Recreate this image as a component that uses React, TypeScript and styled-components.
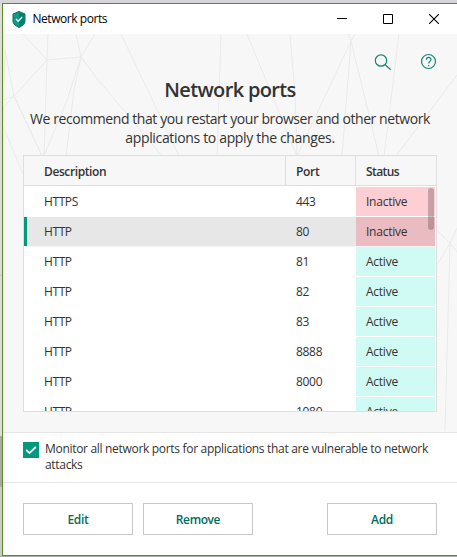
import React from 'react';
import styled, { createGlobalStyle } from 'styled-components';

const GlobalStyle = createGlobalStyle`
  * { box-sizing: border-box; }
  html, body { margin: 0; height: 557px; overflow: hidden; }
  body {
    background: #d3d4d3;
    color: #333;
    font-family: 'Segoe UI', 'Open Sans', 'Noto Sans', sans-serif;
    font-size: 12px;
  }
  button { font: inherit; padding: 0; border: 0; background: none; }
`;

const Desktop = styled.div`
  width: 457px;
  height: 557px;
  padding: 3px 0 1px 2px;
  overflow: hidden;
  background: linear-gradient(#d4d4d9 0 3px, #dcdcdc 3px 275px, #c6c6c6 275px 276px, #dcdcdc 276px 436px, #a9aba9 436px 487px, #c9ccc9 487px 556px, #a5b29f 556px);
`;

const Window = styled.main`
  display: flex;
  flex-direction: column;
  width: 470px;
  height: 553px;
  border: 1px solid #5a8c22;
  background: #fff;
`;

const TitleBar = styled.header`
  display: flex;
  align-items: center;
  width: 454px;
  height: 30px;
  padding-left: 9px;
  color: #000;
`;

const WindowTitle = styled.span`
  flex: 1;
  margin-left: 6.5px;
  line-height: 18px;
  letter-spacing: -0.45px;
`;

const Controls = styled.div`
  display: flex;
  button { display: grid; place-items: center; width: 46px; height: 28px; }
`;

const Content = styled.section`
  display: grid;
  grid-template-columns: 454px;
  height: 399px;
  border-bottom: 1px solid #e6e6e6;
  background: #f7f7f7;
`;

const Mesh = styled.svg`
  grid-area: 1 / 1;
  width: 454px;
  height: 398px;
`;

const Panel = styled.div`
  grid-area: 1 / 1;
  display: flex;
  flex-direction: column;
  z-index: 1;
  padding: 19px 20px 0;
`;

const Tools = styled.div`
  display: flex;
  justify-content: flex-end;
  gap: 28px;
  height: 18px;
  margin-right: -1px;
`;

const Heading = styled.h1`
  width: 414px;
  margin: 6px 0 0;
  font-size: 20px;
  font-weight: 600;
  line-height: 26px;
  letter-spacing: -0.65px;
  text-align: center;
`;

const Advice = styled.p`
  margin: 6px 0 0;
  width: 414px;
  font-size: 14px;
  line-height: 19px;
  text-align: center;
  white-space: nowrap;
`;

const Line = styled.span<{ $spacing: number }>`
  display: block;
  letter-spacing: ${(p) => p.$spacing}px;
`;

const Table = styled.div`
  width: 414px;
  height: 257px;
  margin-top: 8px;
  overflow: hidden;
  border: 1px solid #dedede;
`;

const HeadRow = styled.div`
  display: grid;
  grid-template-columns: 262px 70px 1fr;
  height: 30px;
  border-bottom: 1px solid #dedede;
  background: #f7f7f7;
  font-weight: 600;
`;

const HeadCell = styled.div<{ $first?: boolean; $spacing: number }>`
  padding-left: ${(p) => (p.$first ? 20 : 10)}px;
  border-right: 1px solid #dedede;
  line-height: 31px;
  letter-spacing: ${(p) => p.$spacing}px;
  &:last-child { border-right: 0; }
`;

const Body = styled.div`
  position: relative;
  height: 225px;
  padding: 1px 1px 0 0;
  overflow: hidden;
  background: #fff;
`;

const Row = styled.div<{ $selected: boolean }>`
  display: grid;
  grid-template-columns: 262px 70px 1fr;
  height: 30px;
  border-bottom: 1px solid ${(p) => (p.$selected ? '#f3f3f3' : '#fff')};
  background: ${(p) => (p.$selected ? '#e7e7e7' : '#fff')};
  box-shadow: ${(p) => (p.$selected ? 'inset 3px 0 #00997b' : 'none')};
`;

const Cell = styled.div<{ $first?: boolean; $spacing: number }>`
  padding-left: ${(p) => (p.$first ? 20 : 10)}px;
  line-height: 29px;
  letter-spacing: ${(p) => p.$spacing}px;
`;

const Status = styled(Cell)<{ $active: boolean; $dim: boolean }>`
  background: ${(p) => (p.$active ? '#d0fbf4' : p.$dim ? '#eabcc1' : '#fdced3')};
`;

const ScrollThumb = styled.div`
  position: absolute;
  top: 2px;
  right: 2px;
  width: 6px;
  height: 42px;
  border-radius: 3px;
  background: rgba(80, 65, 70, 0.32);
`;

const Option = styled.label`
  display: flex;
  width: 454px;
  height: 50px;
  padding: 9px 20px 0;
  border-bottom: 1px solid #e6e6e6;
`;

const Check = styled.span`
  display: grid;
  place-items: center;
  width: 16px;
  height: 16px;
  background: #00997f;
`;

const OptionText = styled.span`
  margin-left: 6px;
  margin-top: -1px;
  line-height: 16px;
  white-space: nowrap;
`;

const Footer = styled.footer`
  display: flex;
  gap: 10px;
  width: 454px;
  padding: 20px 20px 0;
`;

const Action = styled.button<{ $end?: boolean; $spacing: number }>`
  width: 110px;
  height: 32px;
  margin-left: ${(p) => (p.$end ? 'auto' : 0)};
  && { border: 1px solid #c9c9c9; background: #fff; }
  color: #006d5c;
  font-weight: 600;
  letter-spacing: ${(p) => p.$spacing}px;
`;

const ports = ['443', '80', '81', '82', '83', '8888', '8000', '1080'];

export default function App() {
  return (
    <Desktop>
      <GlobalStyle />
      <Window>
        <TitleBar>
          <svg width="14" height="17" viewBox="0 0 14 17">
            <path d="M7 .5 13 3v7.2c0 2.8-3 4.8-6 6.3-3-1.500-6-3.500-6-6.300V3Z" fill="#139985" stroke="#087060" />
            <path d="M7 1v15c3-1.500 5.500-3.300 5.500-5.800V3.300Z" fill="#087f6d" />
            <path d="m4 8 2.200 2.200L10.200 6" fill="none" stroke="#e4fff9" strokeWidth="1.400" />
          </svg>
          <WindowTitle>Network ports</WindowTitle>
          <Controls>
            <button aria-label="Minimize"><svg width="10" height="10"><path d="M0 4.500h10" stroke="#000" /></svg></button>
            <button aria-label="Maximize"><svg width="10" height="10"><path d="M.5.5h9v9h-9z" fill="none" stroke="#000" /></svg></button>
            <button aria-label="Close"><svg width="10" height="10"><path d="m0 0 10 10M10 0 0 10" stroke="#000" strokeWidth="1.100" /></svg></button>
          </Controls>
        </TitleBar>
        <Content>
          <Mesh viewBox="3 34 454 398" fill="none" stroke="#eaeaea">
            <path d="M23 34 47 60 81 57 95 34M76 34l5 23 18 24 63 75M81 57 66 103 44 156M81 57 74 90 66 156M48 34l-1 26-3 96M47 60 14 96 3 100M14 96 3 108M4 84l1-34 9 46 28 60M3 126l20 48M14 96l28 60M121 34l58 122M221 34l-4 122M247 34l50 122M290 34l5 60 2 62M351 41 297 156M348 34l3 7 4-7M351 41l-9 115M351 41l28 115M399 34l-15 122M457 75 396 156M437 230l13 13 7 9M450 243l-13 22M450 243l7-15M450 243l-5 188" />
          </Mesh>
          <Panel>
            <Tools>
              <svg width="18" height="18" fill="none" stroke="#168574" strokeWidth="1.200"><circle cx="7" cy="7.500" r="5.700" /><path d="m11 11.500 5.700 5.200" /></svg>
              <svg width="18" height="18" fill="none" stroke="#168574" strokeWidth="1.200"><circle cx="8.500" cy="8.500" r="7" /><path d="M6.400 6.700C6.400 3.600 11 3.700 11 6.500c0 1.800-2.300 1.900-2.300 4M8.700 12v1.300" /></svg>
            </Tools>
            <Heading>Network ports</Heading>
            <Advice>
              <Line $spacing={-0.42}>We recommend that you restart your browser and other network</Line>
              <Line $spacing={-0.34}>applications to apply the changes.</Line>
            </Advice>
            <Table>
              <HeadRow>
                <HeadCell $first $spacing={-0.4}>Description</HeadCell>
                <HeadCell $spacing={-0.3}>Port</HeadCell>
                <HeadCell $spacing={-0.6}>Status</HeadCell>
              </HeadRow>
              <Body>
                {ports.map((port, i) => (
                  <Row key={port} $selected={i === 1}>
                    <Cell $first $spacing={-0.4}>{i ? 'HTTP' : 'HTTPS'}</Cell>
                    <Cell $spacing={-0.3}>{port}</Cell>
                    <Status $spacing={-0.25} $active={i > 1} $dim={i === 1}>{i > 1 ? 'Active' : 'Inactive'}</Status>
                  </Row>
                ))}
                <ScrollThumb />
              </Body>
            </Table>
          </Panel>
        </Content>
        <Option>
          <Check><svg width="12" height="10" fill="none" stroke="#fff" strokeWidth="1.800"><path d="m1.200 4.800 3.300 3.300L10.800 2" /></svg></Check>
          <OptionText>
            <Line $spacing={-0.31}>Monitor all network ports for applications that are vulnerable to network</Line>
            <Line $spacing={-0.31}>attacks</Line>
          </OptionText>
        </Option>
        <Footer>
          <Action $spacing={-0.3}>Edit</Action>
          <Action $spacing={-0.4}>Remove</Action>
          <Action $end $spacing={-0.3}>Add</Action>
        </Footer>
      </Window>
    </Desktop>
  );
}
